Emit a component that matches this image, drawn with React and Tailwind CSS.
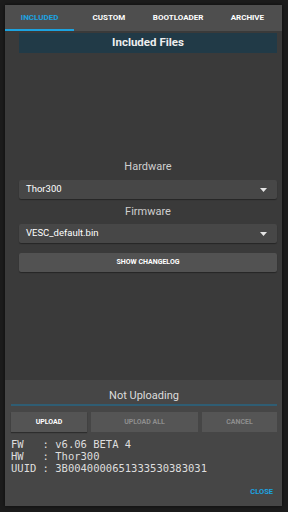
import React from 'react';

const Caret = () => (
  <svg className="w-[7px] h-[4px]" viewBox="0 0 7 4" fill="#e5e5e5"><path d="M0 0h7L3.5 4z" /></svg>
);

const Select = ({ value }) => (
  <div className="h-[19px] bg-[#474747] rounded-[2px] flex items-center justify-between pl-[7px] pr-[10px] text-[9.5px] text-white shadow-[0_1px_1px_rgba(0,0,0,0.35)]">
    <span>{value}</span>
    <Caret />
  </div>
);

export default function App() {
  const tabs = ['INCLUDED', 'CUSTOM', 'BOOTLOADER', 'ARCHIVE'];
  return (
    <div className="w-[288px] h-[512px] bg-[#1c1c1c] pl-[5px] pr-[6px] pt-[5px] pb-[6px] font-['Roboto',sans-serif]">
      <div className="h-full bg-[#3a3a3a] flex flex-col shadow-[0_0_4px_rgba(0,0,0,0.6)]">
        {/* tabs */}
        <div className="h-[26px] bg-[#4e4e4e] flex shrink-0">
          {tabs.map((t, i) => (
            <div key={t} className={`flex-1 flex items-center justify-center text-[8px] font-bold relative ${i === 0 ? 'text-[#1ca3e0]' : 'text-white'}`}>
              {t}
              {i === 0 && <div className="absolute left-0 right-0 bottom-0 h-[2px] bg-[#1ca3e0]" />}
            </div>
          ))}
        </div>

        {/* content */}
        <div className="flex-1 flex flex-col pl-[14px] pr-[5px] pt-[2px]">
          <div className="h-[20px] bg-[#213a47] flex items-center justify-center text-[11.5px] font-bold text-[#eeeeee]">
            Included Files
          </div>
          <div className="flex-1" />
          <div className="flex flex-col pb-[108px]">
            <div className="h-[16px] leading-[16px] text-center text-[11px] text-[#cfcfcf] mb-[5px]">Hardware</div>
            <Select value="Thor300" />
            <div className="h-[16px] leading-[16px] text-center text-[11px] text-[#cfcfcf] mt-[5px] mb-[4px]">Firmware</div>
            <Select value="VESC_default.bin" />
            <div className="mt-[10px] h-[19px] bg-[#525252] rounded-[2px] flex items-center justify-center text-[7px] font-bold text-white shadow-[0_1px_1px_rgba(0,0,0,0.35)]">
              SHOW CHANGELOG
            </div>
          </div>
        </div>

        {/* bottom panel */}
        <div className="h-[126px] bg-[#464646] flex flex-col pl-[6px] pr-[5px] shrink-0">
          <div className="h-[16px] leading-[16px] text-center text-[11px] text-[#dcdcdc] mt-[8px]">Not Uploading</div>
          <div className="h-[2px] bg-[#2f5d73]" />
          <div className="flex gap-[4px] mt-[6px]">
            <div className="w-[76px] h-[20px] bg-[#545454] flex items-center justify-center text-[7px] font-bold text-white shadow-[0_1px_1px_rgba(0,0,0,0.35)]">UPLOAD</div>
            <div className="flex-1 h-[20px] bg-[#555555] flex items-center justify-center text-[7px] font-bold text-[#8e8e8e]">UPLOAD ALL</div>
            <div className="w-[75px] h-[20px] bg-[#555555] flex items-center justify-center text-[7px] font-bold text-[#8e8e8e]">CANCEL</div>
          </div>
          <div className="mt-[6px] font-['DejaVu_Sans_Mono',monospace] text-[10.5px] leading-[12px] text-[#dedede] whitespace-pre">
            <div>FW   : v6.06 BETA 4</div>
            <div>HW   : Thor300</div>
            <div>UUID : 3B0040000651333530383031</div>
          </div>
          <div className="flex-1" />
          <div className="flex justify-end pr-[4px] pb-[9px]">
            <span className="text-[7.5px] font-bold text-[#1ca3e0]">CLOSE</span>
          </div>
        </div>
      </div>
    </div>
  );
}
